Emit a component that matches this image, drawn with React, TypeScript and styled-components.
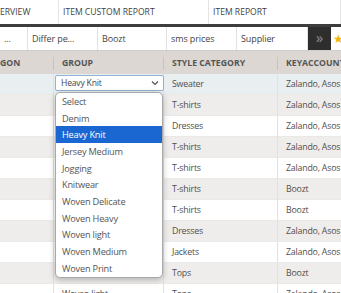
import React from "react";
import styled, { createGlobalStyle } from "styled-components";

const Global = createGlobalStyle`
  html, body { margin: 0; padding: 0; background: #fff; overflow: hidden; }
  body { font-family: "Open Sans", "Liberation Sans", sans-serif; font-stretch: 88%; }
  * { box-sizing: border-box; }
`;

const Page = styled.div`
  width: 341px;
  height: 293px;
  overflow: hidden;
  background: #fff;
  display: flex;
  flex-direction: column;
`;

const TabBar = styled.div`
  display: flex;
  height: 27px;
  flex: none;
  border-bottom: 3px solid #3d3d3d;
  background: #fff;
`;

const Tab = styled.div<{ $w?: number; $flush?: boolean }>`
  ${(p) => (p.$w ? `width: ${p.$w}px; flex: none;` : "flex: 1;")}
  display: flex;
  align-items: center;
  padding-left: ${(p) => (p.$flush ? 0 : 4)}px;
  border-right: 1px solid #e4e4e4;
  font-size: 8.6px;
  font-stretch: 88%;
  color: #3f3f3f;
  text-transform: uppercase;
  white-space: nowrap;
  overflow: hidden;
`;

const FilterBar = styled.div`
  display: flex;
  height: 24px;
  flex: none;
  border-bottom: 1px solid #d0ccc8;
  background: #fff;
`;

const FilterCell = styled.div<{ $w: number }>`
  width: ${(p) => p.$w}px;
  flex: none;
  display: flex;
  align-items: center;
  padding-left: 4px;
  border-right: 1px solid #e2e2e2;
  font-size: 9px;
  font-stretch: 88%;
  letter-spacing: -0.1px;
  color: #444;
  white-space: nowrap;
  overflow: hidden;
`;

const MoreButton = styled.div`
  width: 23px;
  flex: none;
  background: #2e2e2e;
  color: #8d8d8d;
  display: flex;
  align-items: center;
  justify-content: center;
  font-size: 15px;
  line-height: 1;
  padding-bottom: 2px;
`;

const StarCell = styled.div`
  flex: 1;
  display: flex;
  align-items: center;
  padding-left: 2px;
  color: #f2b600;
  font-size: 12px;
`;

const Table = styled.div`
  display: grid;
  grid-template-columns: 53px 110px 114px 1fr;
  grid-template-rows: 23px;
  grid-auto-rows: 21px;
  flex: none;
`;

const HeadCell = styled.div<{ $first?: boolean }>`
  background: #dcd7d3;
  display: flex;
  align-items: center;
  padding-left: ${(p) => (p.$first ? 0 : 9)}px;
  padding-top: 1px;
  font-size: 8.7px;
  font-weight: 700;
  font-stretch: 88%;
  letter-spacing: 0;
  color: #555;
  text-transform: uppercase;
  white-space: nowrap;
  overflow: hidden;
  position: relative;
  &::before {
    content: "";
    display: ${(p) => (p.$first ? "none" : "block")};
    position: absolute;
    left: 0;
    top: 6px;
    bottom: 4px;
    width: 1px;
    background: #c9c3be;
  }
`;

const Cell = styled.div<{ $tone: "sel" | "alt" | "plain"; $first?: boolean }>`
  background: ${(p) =>
    p.$tone === "sel" ? "#e9eef0" : p.$tone === "alt" ? "#efedeb" : "#fff"};
  border-left: ${(p) => (p.$first ? "none" : "1px solid #e3e0dd")};
  border-bottom: 1px solid #ebe8e6;
  display: flex;
  align-items: center;
  padding-left: 8px;
  font-size: 8.8px;
  font-stretch: 88%;
  letter-spacing: -0.2px;
  color: #4f4f4f;
  white-space: nowrap;
  overflow: hidden;
`;

const EditCell = styled.div`
  background: #e9eef0;
  border-left: 1px solid #e3e0dd;
  position: relative;
  padding: 1px 0 0 1px;
`;

const Select = styled.div`
  height: 16px;
  width: 109px;
  background: #fff;
  border: 1px solid #8fb2d6;
  border-radius: 2px;
  display: flex;
  align-items: center;
  justify-content: space-between;
  padding: 0 4px 0 5px;
  font-size: 8.6px;
  font-stretch: 88%;
  letter-spacing: -0.2px;
  color: #444;
`;

const Menu = styled.div`
  position: absolute;
  top: 18px;
  left: 1px;
  width: 108px;
  background: #fff;
  border: 1px solid #a9a9a9;
  border-radius: 5px;
  box-shadow: 0 2px 6px rgba(0, 0, 0, 0.25);
  z-index: 5;
  display: flex;
  flex-direction: column;
  overflow: hidden;
`;

const MenuItem = styled.div<{ $active?: boolean }>`
  height: 16.7px;
  display: flex;
  align-items: center;
  padding-left: 6px;
  font-size: 9.2px;
  font-stretch: 88%;
  letter-spacing: -0.2px;
  background: ${(p) => (p.$active ? "#1a67d2" : "transparent")};
  color: ${(p) => (p.$active ? "#fff" : "#555")};
  white-space: nowrap;
`;

const options = [
  "Select",
  "Denim",
  "Heavy Knit",
  "Jersey Medium",
  "Jogging",
  "Knitwear",
  "Woven Delicate",
  "Woven Heavy",
  "Woven light",
  "Woven Medium",
  "Woven Print",
];

const rows: [string, string, string][] = [
  ["", "T-shirts", "Zalando, Asos"],
  ["", "Dresses", "Zalando, Asos"],
  ["", "T-shirts", "Zalando, Asos"],
  ["", "T-shirts", "Zalando, Asos"],
  ["", "T-shirts", "Boozt"],
  ["", "T-shirts", "Boozt"],
  ["", "Dresses", "Zalando, Asos"],
  ["", "Jackets", "Zalando, Asos"],
  ["Woven Delicate", "Tops", "Boozt"],
  ["Woven light", "Tops", "Zalando, Asos"],
];

export default function App() {
  return (
    <Page>
      <Global />
      <TabBar>
        <Tab $w={59} $flush>ERVIEW</Tab>
        <Tab $w={150}>ITEM CUSTOM REPORT</Tab>
        <Tab>ITEM REPORT</Tab>
      </TabBar>
      <FilterBar>
        <FilterCell $w={28}>...</FilterCell>
        <FilterCell $w={70}>Differ pe...</FilterCell>
        <FilterCell $w={69}>Boozt</FilterCell>
        <FilterCell $w={70}>sms prices</FilterCell>
        <FilterCell $w={71}>Supplier</FilterCell>
        <MoreButton>»</MoreButton>
        <StarCell>★</StarCell>
      </FilterBar>
      <Table>
        <HeadCell $first>GON</HeadCell>
        <HeadCell>GROUP</HeadCell>
        <HeadCell>STYLE CATEGORY</HeadCell>
        <HeadCell>KEYACCOUNT</HeadCell>

        <Cell $tone="sel" $first />
        <EditCell>
          <Select>
            <span>Heavy Knit</span>
            <svg width="8" height="6" viewBox="0 0 8 6">
              <path d="M1 1.5 L4 4.5 L7 1.5" fill="none" stroke="#555" strokeWidth="1.2" />
            </svg>
          </Select>
          <Menu>
            {options.map((o) => (
              <MenuItem key={o} $active={o === "Heavy Knit"}>
                {o}
              </MenuItem>
            ))}
          </Menu>
        </EditCell>
        <Cell $tone="sel">Sweater</Cell>
        <Cell $tone="sel">Zalando, Asos</Cell>

        {rows.map((r, i) => {
          const tone = i % 2 === 0 ? "alt" : "plain";
          return (
            <React.Fragment key={i}>
              <Cell $tone={tone} $first />
              <Cell $tone={tone}>{r[0]}</Cell>
              <Cell $tone={tone}>{r[1]}</Cell>
              <Cell $tone={tone}>{r[2]}</Cell>
            </React.Fragment>
          );
        })}
      </Table>
    </Page>
  );
}
